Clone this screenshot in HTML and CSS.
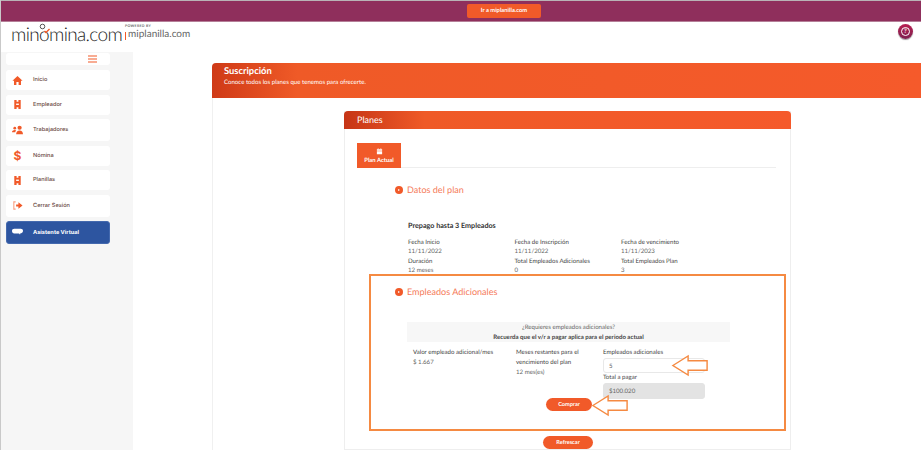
FILE: index.html
```html
<!DOCTYPE html>
<html>
    <head>
        <title>Suscripción - minomina.com</title>
        <link rel="stylesheet" href="styles.css">
    </head>
    <body>
        <div class="topbar">
            <a class="topbar-link">Ir a miplanilla.com</a>
        </div>

        <header class="header">
            <div class="logo">
                <span class="logo-main">min<span class="logo-o">o<svg class="logo-person" viewBox="0 0 16 12"><circle cx="5.500" cy="3.500" r="2.300" fill="none" stroke="#555" stroke-width="1"/><path d="M7.500 8l1.500 1.500 3.500-3.500" fill="none" stroke="#f15a29" stroke-width="1.400"/></svg></span>mina.com</span>
                <span class="logo-sep"></span>
                <span class="logo-powered">
                    <small>POWERED BY</small>
                    <span>miplanilla.com</span>
                </span>
            </div>
            <div class="help"><span>?</span></div>
        </header>

        <div class="layout">
            <aside class="sidebar">
                <div class="toggle">
                    <svg width="9" height="8" viewBox="0 0 9 8"><path d="M0 1h9M0 4h9M0 7h9" stroke="#f15a29" stroke-width="1.2"/></svg>
                </div>
                <a class="nav-item">
                    <svg class="nav-icon" viewBox="0 0 12 12"><path d="M6 1L0.5 6.2H2.2V11H4.8V7.6H7.2V11H9.8V6.2H11.500z" fill="#f15a29"/></svg>
                    Inicio
                </a>
                <a class="nav-item">
                    <svg class="nav-icon" viewBox="0 0 12 12"><path d="M2.500 1h2.500v2h2V1h2.500v10H7V9H5v2H2.500z" fill="#f15a29"/><path d="M4.500 5h3v1.500h-3z" fill="#fff"/></svg>
                    Empleador
                </a>
                <a class="nav-item nav-tall">
                    <svg class="nav-icon" viewBox="0 0 12 12"><circle cx="8.300" cy="3" r="2.300" fill="#f15a29"/><circle cx="3" cy="3.500" r="1.500" fill="#f15a29"/><path d="M4.500 10c0-2.500 1.500-4 3.800-4s3.700 1.500 3.700 4zM0 8c0-1.500 1-2.500 3-2.500.5 0 1 .1 1.300.3L3.500 8z" fill="#f15a29"/></svg>
                    Trabajadores
                </a>
                <a class="nav-item">
                    <span class="nav-icon nav-dollar">$</span>
                    Nómina
                </a>
                <a class="nav-item">
                    <svg class="nav-icon" viewBox="0 0 12 12"><path d="M2.500 1h2.500v2h2V1h2.500v10H7V9H5v2H2.500z" fill="#f15a29"/><path d="M4.500 5h3v1.500h-3z" fill="#fff"/></svg>
                    Planillas
                </a>
                <a class="nav-item nav-tall">
                    <svg class="nav-icon" viewBox="0 0 12 12"><path d="M4 2H2v8h2" fill="none" stroke="#f9a184" stroke-width="1.200"/><path d="M4.500 4.800h2.500V2.500L11.500 6 7 9.500V7.200H4.500z" fill="#f15a29"/></svg>
                    Cerrar Sesión
                </a>
                <a class="nav-item nav-bot">
                    <svg class="nav-icon" viewBox="0 0 12 10"><path d="M2.500 1h7C11 1 12 1.800 12 3.200s-1 2.800-2.500 2.800H8.500l.5 1.500-1.500-1.500H2.500C1 6 0 4.800 0 3.400S1 1 2.500 1z" fill="#fff"/></svg>
                    Asistente Virtual
                </a>
            </aside>

            <main class="content">
                <section class="page-head">
                    <h1>Suscripción</h1>
                    <p>Conoce todos los planes que tenemos para ofrecerte.</p>
                </section>

                <div class="page-body">
                    <section class="card">
                        <h2 class="card-title">Planes</h2>
                        <div class="card-body">
                            <div class="tabs">
                                <div class="tab">
                                    <svg width="7" height="7" viewBox="0 0 8 8"><path d="M1 1.500h6v1.500H1zM1 3.700h6V7H1z" fill="#fff"/><path d="M2.500 .5v1M5.500 .5v1" stroke="#fff"/></svg>
                                    <span>Plan Actual</span>
                                </div>
                            </div>

                            <h3 class="section-title first"><i class="bullet"></i>Datos del plan</h3>

                            <div class="plan">
                                <h4>Prepago hasta 3 Empleados</h4>
                                <div class="plan-grid">
                                    <div><b>Fecha Inicio</b>11/11/2022</div>
                                    <div><b>Fecha de Inscripción</b>11/11/2022</div>
                                    <div><b>Fecha de vencimiento</b>11/11/2023</div>
                                    <div><b>Duración</b>12 meses</div>
                                    <div><b>Total Empleados Adicionales</b>0</div>
                                    <div><b>Total Empleados Plan</b>3</div>
                                </div>
                            </div>

                            <div class="highlight">
                                <h3 class="section-title"><i class="bullet"></i>Empleados Adicionales</h3>

                                <div class="notice">
                                    <span>¿Requieres empleados adicionales?</span>
                                    <b>Recuerda que el v/r a pagar aplica para el periodo actual</b>
                                </div>

                                <div class="extra">
                                    <div class="extra-value"><b>Valor empleado adicional/mes</b>$ 1.667</div>
                                    <div class="extra-months"><b>Meses restantes para el vencimiento del plan</b>12 mes(es)</div>
                                    <div class="extra-form">
                                        <label>Empleados adicionales</label>
                                        <div class="field">5</div>
                                        <label>Total a pagar</label>
                                        <div class="field field-readonly">$100.020</div>
                                    </div>
                                </div>

                                <a class="btn btn-buy">Comprar</a>

                                <svg class="arrow arrow-input" viewBox="0 0 40 24"><path d="M2 12L18 2V7H38V17H18V22z" fill="#fff" stroke="#f58a42" stroke-width="1.500"/></svg>
                                <svg class="arrow arrow-buy" viewBox="0 0 40 24"><path d="M2 12L18 2V7H38V17H18V22z" fill="#fff" stroke="#f58a42" stroke-width="1.500"/></svg>
                            </div>

                            <a class="btn btn-refresh">Refrescar</a>
                        </div>
                    </section>
                </div>
            </main>
        </div>
    </body>
</html>
```

FILE: styles.css
```css
* {
    box-sizing: border-box;
}
html,
body {
    height: 100%;
    overflow: hidden;
}
body {
    margin: 0;
    font-family: Lato, Arial, sans-serif;
    font-size: 6.100px;
    color: #666;
    background: white;
    border-left: 1px solid #c9c9c9;
    text-rendering: geometricPrecision;
}
a {
    display: block;
}
.topbar {
    height: 22px;
    background-color: #8f2f5c;
    border-top: 1px solid #b9b3b6;
    border-bottom: 1px solid #b57f98;
    display: flex;
    align-items: center;
    padding-left: 466px;
}
.topbar-link {
    width: 74px;
    height: 14px;
    line-height: 14px;
    text-align: center;
    background: #f15a29;
    border-radius: 2px;
    color: white;
    font-size: 5.800px;
    font-weight: bold;
}
.header {
    height: 30px;
    display: flex;
    justify-content: space-between;
    padding: 0 8px 0 10px;
}
.logo {
    display: flex;
    align-items: flex-start;
}
.logo-main {
    font-size: 19px;
    font-weight: 300;
    letter-spacing: -0.650px;
    line-height: 26px;
    color: #222;
}
.logo-o {
    position: relative;
}
.logo-person {
    position: absolute;
    left: -2px;
    top: 0;
    width: 16px;
    height: 12px;
}
.logo-sep {
    width: 1px;
    height: 8px;
    margin: 10px 2px 0 3px;
    background: #f15a29;
}
.logo-powered {
    display: flex;
    flex-direction: column;
    color: #666;
    font-size: 10px;
    line-height: 11px;
    padding-top: 1px;
}
.logo-powered small {
    font-size: 3.500px;
    line-height: 6px;
    font-weight: bold;
    letter-spacing: 0.3px;
    margin-left: -3px;
}
.help {
    width: 15px;
    height: 15px;
    margin-top: 2px;
    border-radius: 50%;
    background: linear-gradient(180deg, #b81f52, #7d2250);
    box-shadow: 0 1px 1px rgba(0, 0, 0, 0.4);
    display: flex;
    justify-content: center;
    align-items: center;
}
.help span {
    width: 9px;
    height: 9px;
    border: 1px solid white;
    border-radius: 50%;
    color: white;
    font-size: 6px;
    line-height: 7px;
    text-align: center;
    font-weight: bold;
}
.layout {
    display: flex;
    height: 398px;
}
.sidebar {
    width: 132px;
    flex-shrink: 0;
    background: #f6f6f6;
    padding: 1px 23px 0 5px;
    display: flex;
    flex-direction: column;
    gap: 4.500px;
}
.toggle {
    height: 12px;
    margin-bottom: 0.500px;
    background: white;
    border-radius: 3px;
    display: flex;
    justify-content: flex-end;
    align-items: center;
    padding-right: 13px;
}
.nav-item {
    height: 20px;
    background: white;
    border-radius: 3px;
    display: flex;
    align-items: center;
    gap: 10px;
    padding-left: 6px;
    color: #6b4a44;
    font-family: Inter, Arial, sans-serif;
    font-size: 5.650px;
    font-weight: 500;
}
.nav-tall {
    height: 22px;
}
.nav-bot {
    height: 23px;
    background: #2d55a0;
    border: 1px solid #4469ae;
    color: white;
    font-weight: bold;
    padding-left: 5px;
}
.nav-icon {
    width: 11px;
    height: 11px;
    flex-shrink: 0;
}
.nav-dollar {
    color: #f15a29;
    font-size: 12px;
    line-height: 11px;
    font-weight: bold;
    text-align: center;
}
.content {
    flex: 1;
    padding-top: 11px;
    padding-left: 79px;
}
.page-head {
    height: 35px;
    padding: 3px 12px;
    border-radius: 4px 0 0 0;
    background: linear-gradient(90deg, #cf3a17 0, #ef5a27 12%, #f55a2b 100%);
    color: white;
}
.page-head h1 {
    margin: 0;
    font-size: 9.400px;
    line-height: 12px;
}
.page-head p {
    margin: 0;
    font-size: 6.100px;
    line-height: 9px;
}
.page-body {
    border-left: 1px solid #f0f0f0;
    padding: 13px 130px 0 131px;
}
.card {
    width: 447px;
    border: 1px solid #eeeeee;
    border-top: none;
}
.card-title {
    margin: 0 -1px;
    height: 18px;
    line-height: 17px;
    padding-left: 13px;
    background: linear-gradient(90deg, #c63516 0, #ef5a27 18%, #f55a2b 100%);
    border-radius: 4px 4px 0 0;
    color: white;
    font-size: 9px;
    font-weight: normal;
}
.card-body {
    padding: 14px 14px 0 12px;
}
.tabs {
    height: 25px;
    border-bottom: 1px solid #eeeeee;
}
.tab {
    width: 44px;
    height: 25px;
    background: #f15a29;
    color: white;
    font-size: 5.900px;
    font-weight: bold;
    display: flex;
    flex-direction: column;
    align-items: center;
    justify-content: center;
    gap: 2px;
}
.section-title {
    margin: 0;
    display: flex;
    align-items: center;
    gap: 4px;
    color: #f57b5a;
    font-size: 9.050px;
    font-weight: normal;
    line-height: 14px;
    padding-left: 24px;
}
.section-title.first {
    margin-top: 15px;
    padding-left: 38px;
}
.bullet {
    width: 8px;
    height: 8px;
    border-radius: 50%;
    background: #f15a29;
    position: relative;
}
.bullet::after {
    content: "";
    position: absolute;
    left: 2.500px;
    top: 2.500px;
    border-left: 2.500px solid white;
    border-top: 1.500px solid transparent;
    border-bottom: 1.500px solid transparent;
}
.plan {
    padding: 24px 0 0 50px;
    margin-left: 1px;
}
.plan h4 {
    margin: 0 0 7px;
    color: #333;
    font-size: 7.200px;
    line-height: 10px;
    font-weight: bold;
}
.plan-grid {
    display: grid;
    grid-template-columns: 106.500px 106.500px 106.500px;
    line-height: 9.300px;
}
.plan-grid b,
.extra b,
.extra-form label {
    display: block;
    color: #444;
    font-weight: normal;
}
.highlight {
    position: relative;
    height: 157px;
    margin: -1px -10px 0 12px;
    border: 2px solid #f58a42;
    padding-top: 9px;
}
.notice {
    margin: 23px 0 0 36px;
    width: 323px;
    height: 20px;
    background: #f7f7f7;
    text-align: center;
    line-height: 9.500px;
    padding-top: 1px;
}
.notice span,
.notice b {
    display: block;
}
.notice b {
    color: #444;
    font-weight: 700;
}
.extra {
    display: flex;
    line-height: 10px;
    padding-top: 6px;
    margin-left: 42px;
}
.extra-value {
    width: 103px;
}
.extra-months {
    width: 87px;
}
.extra-form {
    width: 102px;
}
.field {
    height: 15px;
    padding-left: 5px;
    line-height: 15px;
    border: 1px solid #e8e8e8;
    border-radius: 3px;
}
.field-readonly {
    height: 16px;
    line-height: 16px;
    background: #e3e3e3;
    border-color: #e3e3e3;
}
.btn {
    position: absolute;
    height: 13px;
    line-height: 13px;
    border-radius: 7px;
    background: #f15a29;
    color: white;
    font-size: 5.600px;
    font-weight: bold;
    text-align: center;
}
.btn-buy {
    left: 175px;
    top: 122px;
    width: 46px;
}
.btn-refresh {
    position: static;
    width: 50px;
    margin: 5px 0 0 186px;
}
.arrow {
    position: absolute;
    width: 38px;
    height: 23px;
}
.arrow-input {
    left: 300px;
    top: 78px;
}
.arrow-buy {
    left: 220px;
    top: 118px;
}
```
